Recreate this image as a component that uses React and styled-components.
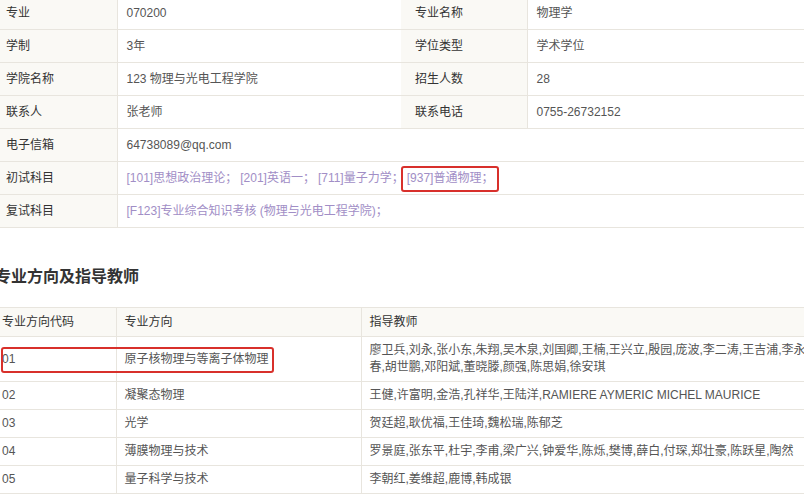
import React from 'react';
import styled, { createGlobalStyle } from 'styled-components';

const GlobalStyle = createGlobalStyle`
	html, body {
		margin: 0;
		padding: 0;
		background: #fff;
		overflow: hidden;
	}
	body {
		font-family: "Liberation Sans", "Noto Sans CJK SC", sans-serif;
		font-size: 12px;
		color: #555;
	}
	td, th {
		box-sizing: border-box;
	}
`;

// page is scrolled a little: top row and left edge are cut off
const Page = styled.div`
	position: relative;
	width: 836px;
	margin: -3px 0 0 -8px;
`;

const InfoTable = styled.table`
	width: 830px;
	border-collapse: collapse;
	table-layout: fixed;
`;

const Label = styled.td`
	width: ${props => props.w ? props.w + 'px' : 'auto'};
	padding: 7px 9px 7px 14px;
	line-height: 18px;
	background: #faf9f5;
	color: #333;
	border: 1px solid #e8e5de;
	border-top: none;
	border-left: none;
`;

const Value = styled.td`
	width: ${props => props.w ? props.w + 'px' : 'auto'};
	padding: 7px 9px;
	line-height: 18px;
	color: ${props => props.link ? '#a18ec6' : '#555'};
	border: 1px solid #e8e5de;
	border-top: none;
	border-right: none;
`;

// one exam subject link
const Subject = styled.span`
	margin-right: 3px;
`;

const Heading = styled.h3`
	margin: 36px 0 0 3px;
	height: 43px;
	font-family: "Noto Sans CJK SC", sans-serif;
	font-size: 16px;
	font-weight: 700;
	line-height: 22px;
	color: #333;
`;

const DirTable = styled.table`
	width: 824px;
	margin-left: 2px;
	border-collapse: collapse;
	table-layout: fixed;
`;

const Th = styled.th`
	width: ${props => props.w ? props.w + 'px' : 'auto'};
	padding: 5px 8px;
	line-height: 18px;
	text-align: left;
	font-weight: normal;
	color: #333;
	background: #faf9f5;
	border: 1px solid #e8e5de;
	border-left: ${props => props.first ? 'none' : '1px solid #e8e5de'};
	border-right: none;
`;

const Td = styled.td`
	padding: 5px 8px;
	line-height: 17px;
	color: #555;
	border: 1px solid #e8e5de;
	border-left: ${props => props.first ? 'none' : '1px solid #e8e5de'};
	border-right: none;
`;

// red annotation boxes drawn over the screenshot
const Mark = styled.div`
	position: absolute;
	left: ${props => props.x}px;
	top: ${props => props.y}px;
	width: ${props => props.w}px;
	height: ${props => props.h}px;
	border: 2px solid #d8302b;
	border-radius: 3px;
	box-sizing: border-box;
	pointer-events: none;
`;

const firstExams = ['[101]思想政治理论；', '[201]英语一；', '[711]量子力学；', '[937]普通物理；'];

const directions = [
	['01', '原子核物理与等离子体物理', '廖卫兵,刘永,张小东,朱翔,吴木泉,刘国卿,王楠,王兴立,殷园,庞波,李二涛,王吉浦,李永春,胡世鹏,邓阳斌,董晓滕,颜强,陈思娟,徐安琪'],
	['02', '凝聚态物理', '王健,许富明,金浩,孔祥华,王陆洋,RAMIERE AYMERIC MICHEL MAURICE'],
	['03', '光学', '贺廷超,耿优福,王佳琦,魏松瑞,陈郁芝'],
	['04', '薄膜物理与技术', '罗景庭,张东平,杜宇,李甫,梁广兴,钟爱华,陈烁,樊博,薛白,付琛,郑壮豪,陈跃星,陶然'],
	['05', '量子科学与技术', '李朝红,姜维超,鹿博,韩成银'],
];

export default function App() {
	return (
		<Page>
			<GlobalStyle />
			<InfoTable>
				<tbody>
					<tr>
						<Label w={125}>专业</Label>
						<Value w={284}>070200</Value>
						<Label w={126}>专业名称</Label>
						<Value>物理学</Value>
					</tr>
					<tr>
						<Label>学制</Label>
						<Value>3年</Value>
						<Label>学位类型</Label>
						<Value>学术学位</Value>
					</tr>
					<tr>
						<Label>学院名称</Label>
						<Value>123 物理与光电工程学院</Value>
						<Label>招生人数</Label>
						<Value>28</Value>
					</tr>
					<tr>
						<Label>联系人</Label>
						<Value>张老师</Value>
						<Label>联系电话</Label>
						<Value>0755-26732152</Value>
					</tr>
					<tr>
						<Label>电子信箱</Label>
						<Value colSpan={3}>64738089@qq.com</Value>
					</tr>
					<tr>
						<Label>初试科目</Label>
						<Value colSpan={3} link>
							{firstExams.map(s => <Subject key={s}>{s}</Subject>)}
						</Value>
					</tr>
					<tr>
						<Label>复试科目</Label>
						<Value colSpan={3} link>[F123]专业综合知识考核 (物理与光电工程学院)；</Value>
					</tr>
				</tbody>
			</InfoTable>

			<Heading>专业方向及指导教师</Heading>

			<DirTable>
				<thead>
					<tr>
						<Th w={122} first>专业方向代码</Th>
						<Th w={245}>专业方向</Th>
						<Th>指导教师</Th>
					</tr>
				</thead>
				<tbody>
					{directions.map(([code, name, teachers]) => (
						<tr key={code}>
							<Td first>{code}</Td>
							<Td>{name}</Td>
							<Td>{teachers}</Td>
						</tr>
					))}
				</tbody>
			</DirTable>

			<Mark x={409} y={169} w={98} h={26} />
			<Mark x={9} y={350} w={273} h={26} />
		</Page>
	);
}
